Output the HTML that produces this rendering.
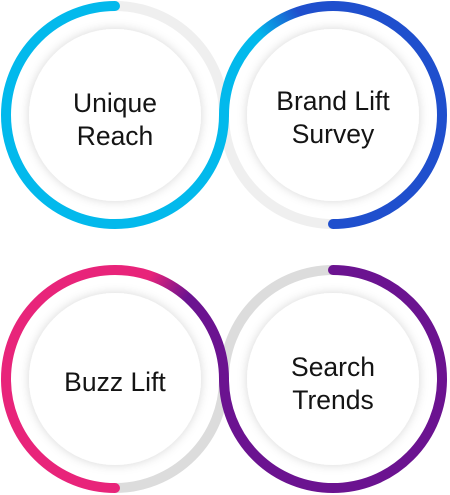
<!DOCTYPE html>
<html><head><style>
html,body{margin:0;padding:0;background:#fff;width:450px;height:495px;overflow:hidden}
svg{display:block}
text{font-family:"Liberation Sans",sans-serif;font-size:26.5px;fill:#141414;text-anchor:middle}
</style></head><body>
<svg width="450" height="495" viewBox="0 0 450 495">
<defs>
<linearGradient id="gb" gradientUnits="userSpaceOnUse" x1="262" y1="40" x2="300" y2="14">
<stop offset="0" stop-color="#02b9ec"/><stop offset="1" stop-color="#1f4fcd"/></linearGradient>
<linearGradient id="gp" gradientUnits="userSpaceOnUse" x1="150" y1="275" x2="185" y2="300">
<stop offset="0" stop-color="#e8247a"/><stop offset="1" stop-color="#6b1390"/></linearGradient>
<filter id="sh" x="-20%" y="-20%" width="140%" height="140%"><feDropShadow dx="0" dy="0" stdDeviation="5" flood-color="#000" flood-opacity="0.16"/></filter>
</defs>
<g fill="none" stroke-width="10" stroke-linecap="round">
<path d="M115 6 A109 109 0 0 1 224 115" stroke="#efefef"/>
<path d="M333 224 A109 109 0 0 1 224 115" stroke="#efefef"/>
<path d="M224 379 A109 109 0 0 1 115 488" stroke="#dcdcdc"/>
<path d="M224 379 A109 109 0 0 1 333 270" stroke="#dcdcdc"/>
<path d="M115 6 A109 109 0 1 0 224 115" stroke="#02b9ec"/>
<path d="M224 115 A109 109 0 0 1 333 6" stroke="url(#gb)"/>
<path d="M333 6 A109 109 0 0 1 333 224" stroke="#1f4fcd"/>
<path d="M115 488 A109 109 0 0 1 115 270" stroke="#e8247a"/>
<path d="M115 270 A109 109 0 0 1 224 379" stroke="url(#gp)"/>
<path d="M224 379 A109 109 0 1 0 333 270" stroke="#6b1390"/>
</g>
<g fill="#fff" filter="url(#sh)">
<circle cx="115" cy="115" r="86"/><circle cx="333" cy="115" r="86"/>
<circle cx="115" cy="379" r="86"/><circle cx="333" cy="379" r="86"/>
</g>
<text x="115" y="112">Unique</text><text x="115" y="145">Reach</text>
<text x="333" y="110">Brand Lift</text><text x="333" y="143">Survey</text>
<text x="115" y="391">Buzz Lift</text>
<text x="333" y="376">Search</text><text x="333" y="409">Trends</text>
</svg>
</body></html>
